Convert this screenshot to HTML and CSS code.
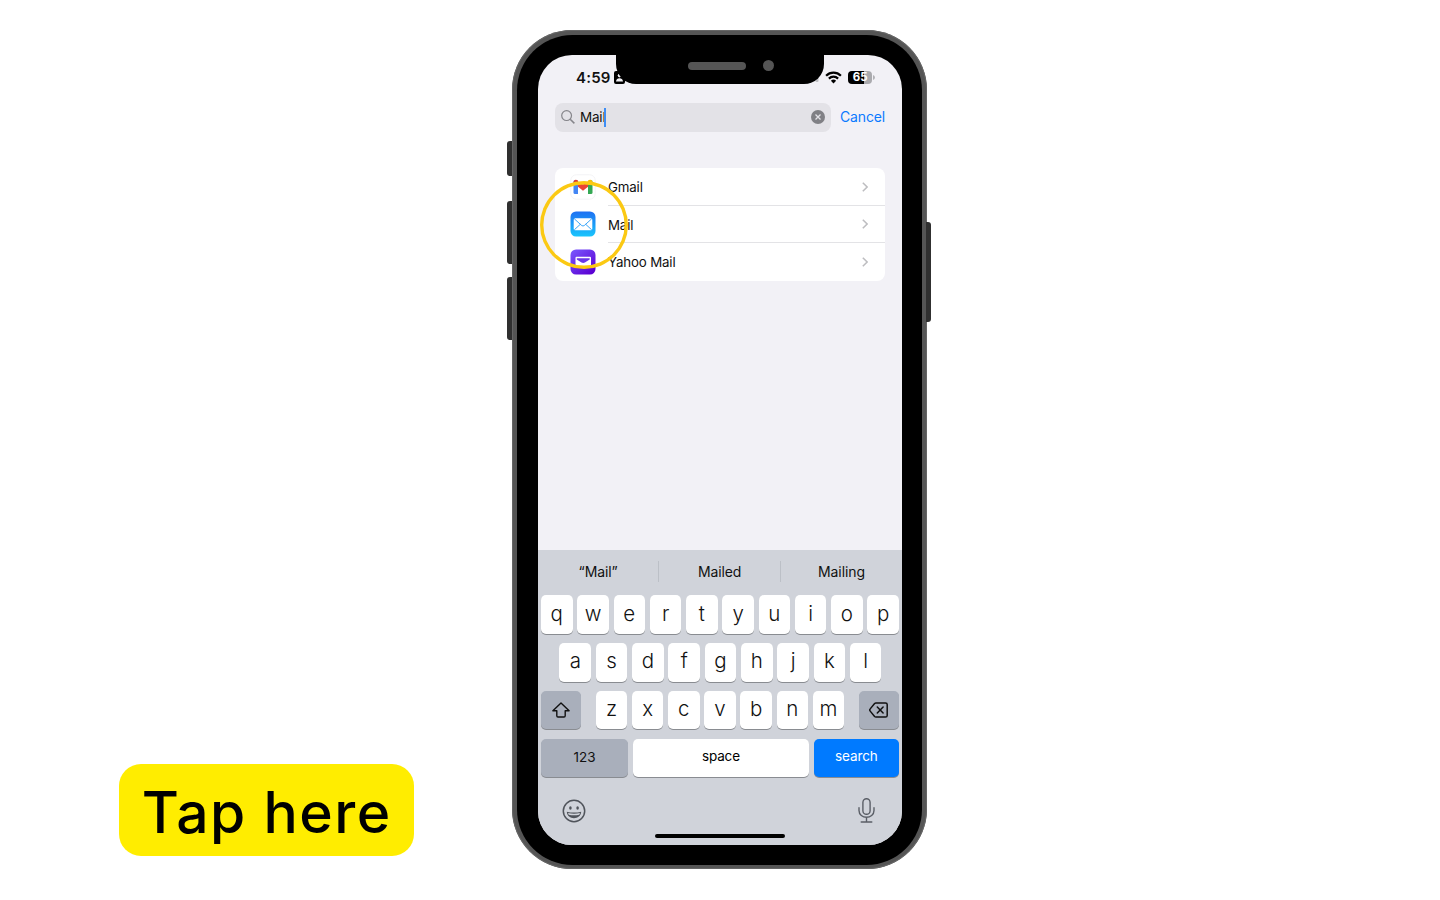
FILE: index.html
```html
<!DOCTYPE html>
<html lang="en">
<head>
<meta charset="utf-8">
<title>Mail settings</title>
<link rel="stylesheet" href="styles.css">
</head>
<body>
<main class="stage">
  <div class="callout"><span class="callout-text">Tap here</span></div>
  <div class="phone">
    <i class="side b1"></i><i class="side b2"></i><i class="side b3"></i><i class="side power"></i>
    <div class="rim">
    <div class="bezel">
      <div class="screen">
        <div class="status">
          <span class="time">4:59</span>
          <svg class="card" width="11" height="13" viewBox="0 0 11 13"><rect width="11" height="13" rx="2"/><circle cx="5.500" cy="4.600" r="1.800" fill="#f2f1f6"/><path d="M2 10.500c0-4.500 7-4.500 7 0z" fill="#f2f1f6"/></svg>
          <svg class="signal" width="6" height="5" viewBox="0 0 6 5"><rect x="2.500" width="3" height="5" rx="1" fill="#bdbdc1"/></svg>
          <svg class="wifi" width="17" height="13" viewBox="0 0 17 13"><g fill="none" stroke="#000" stroke-width="2.200"><path d="M1.100 4.700a10.500 10.500 0 0 1 14.800 0"/><path d="M3.900 7.600a6.500 6.500 0 0 1 9.200 0"/></g><path d="M5.900 9.800a3.700 3.700 0 0 1 5.200 0L8.500 12.400z"/></svg>
          <span class="battery"><b>65</b></span>
          <svg class="tip" width="2" height="5" viewBox="0 0 2 5"><path d="M0 0q2 .7 2 2.500T0 5z" fill="#b2b2b6"/></svg>
        </div>
        <div class="search">
          <div class="field">
            <svg class="glass" width="14" height="14" viewBox="0 0 14 14" fill="none" stroke="#85858a" stroke-width="1.200"><circle cx="5.600" cy="5.600" r="4.900"/><path d="M9.200 9.200l4.200 4.200" stroke-width="1.500"/></svg>
            <span class="query">Mail</span><i class="caret"></i>
            <svg class="clear" width="14" height="14" viewBox="0 0 14 14"><circle cx="7" cy="7" r="7" fill="#808085"/><path d="M4.500 4.500l5 5m0-5l-5 5" stroke="#e3e2e7" stroke-width="1.300"/></svg>
          </div>
          <span class="cancel">Cancel</span>
        </div>
        <div class="list">
          <div class="row">
            <svg class="app" width="26" height="26" viewBox="0 0 26 26"><rect x=".8" y=".8" width="24.400" height="24.400" rx="5.500" fill="#fff" stroke="#f3f3f5"/><path d="M3.500 8v10.500a1.500 1.500 0 0 0 1.500 1.500h3V9.500L4 6z" fill="#4285f4"/><path d="M22.500 8v10.500A1.500 1.500 0 0 1 21 20h-3V9.500L22 6z" fill="#34a853"/><path d="M8 7.500l5 3 5-3v5.300l-5 3.900-5-3.900z" fill="#ea4335"/><path d="M3.500 8.500c0-3 2.500-3.600 4.500-2v3.300H3.500z" fill="#d93a30"/><path d="M22.500 8.500c0-3-2.500-3.600-4.500-2v3.300h4.500z" fill="#fbbc04"/></svg>
            <div class="label"><span>Gmail</span><svg class="chev" width="6" height="10" viewBox="0 0 6 10"><path d="M.8.7L5.100 5 .8 9.300"/></svg></div>
          </div>
          <div class="row">
            <svg class="app" width="26" height="26" viewBox="0 0 26 26"><defs><linearGradient id="m" x2="0" y2="1"><stop stop-color="#1e70f2"/><stop offset="1" stop-color="#19c5fc"/></linearGradient></defs><rect x=".5" y=".5" width="25" height="25" rx="5.500" fill="url(#m)"/><rect x="3.700" y="7.300" width="18.600" height="12" rx="1.500" fill="#fff"/><path d="M4.300 7.800l7.400 6.700q1.300 1 2.600 0l7.400-6.700M4.300 18.800l6-5.500m11.400 5.500l-6-5.500" fill="none" stroke="#249bf7" stroke-width=".9"/></svg>
            <div class="label"><span>Mail</span><svg class="chev" width="6" height="10" viewBox="0 0 6 10"><path d="M.8.7L5.100 5 .8 9.300"/></svg></div>
          </div>
          <div class="row">
            <svg class="app" width="26" height="26" viewBox="0 0 26 26"><defs><linearGradient id="y" x2=".8" y2="1"><stop stop-color="#7a5aff"/><stop offset="1" stop-color="#5a00d2"/></linearGradient></defs><rect x=".5" y=".5" width="25" height="25" rx="5.500" fill="url(#y)"/><rect x="5.500" y="7.800" width="15.500" height="10.500" rx="1" fill="#fff"/><path d="M6.800 9.200h12.900v1.400l-4.800 3q-1.700.9-3.400 0l-4.700-3z" fill="#6936e8"/></svg>
            <div class="label"><span>Yahoo Mail</span><svg class="chev" width="6" height="10" viewBox="0 0 6 10"><path d="M.8.7L5.100 5 .8 9.300"/></svg></div>
          </div>
        </div>
        <div class="keyboard">
          <div class="suggest"><span>“Mail”</span><span>Mailed</span><span>Mailing</span></div>
          <div class="keys"><kbd>q</kbd><kbd>w</kbd><kbd>e</kbd><kbd>r</kbd><kbd>t</kbd><kbd>y</kbd><kbd>u</kbd><kbd>i</kbd><kbd>o</kbd><kbd>p</kbd></div>
          <div class="keys mid"><kbd>a</kbd><kbd>s</kbd><kbd>d</kbd><kbd>f</kbd><kbd>g</kbd><kbd>h</kbd><kbd>j</kbd><kbd>k</kbd><kbd>l</kbd></div>
          <div class="keys low">
            <kbd class="gray mod"><svg width="18" height="16" viewBox="0 0 18 16" fill="none" stroke="#111" stroke-width="1.400" stroke-linejoin="round"><path d="M9 .9L.9 8.700h3.900v5.100q0 1.200 1.200 1.200h6q1.200 0 1.200-1.200V8.700h3.900z"/></svg></kbd>
            <div class="keys inner"><kbd>z</kbd><kbd>x</kbd><kbd>c</kbd><kbd>v</kbd><kbd>b</kbd><kbd>n</kbd><kbd>m</kbd></div>
            <kbd class="gray mod"><svg width="19" height="16" viewBox="0 0 19 16" fill="none" stroke="#111" stroke-width="1.500" stroke-linejoin="round" stroke-linecap="round"><path d="M7 .9h9.500q1.700 0 1.700 1.700v10.800q0 1.700-1.700 1.700H7q-.8 0-1.400-.6L1.200 9.100q-1-1.100 0-2.200l4.400-5.400Q6.200.9 7 .9zM8.300 5l5.800 6m0-6l-5.800 6"/></svg></kbd>
          </div>
          <div class="keys bottom"><kbd class="gray num">123</kbd><kbd class="space">space</kbd><kbd class="go">search</kbd></div>
          <div class="tools">
            <svg width="24" height="24" viewBox="0 0 24 24"><circle cx="12" cy="12" r="10.700" fill="none" stroke="#50545b" stroke-width="1.500"/><ellipse cx="8.400" cy="9" rx="1.300" ry="1.700" fill="#50545b"/><ellipse cx="15.600" cy="9" rx="1.300" ry="1.700" fill="#50545b"/><path d="M4.800 12.700q7.200 1.800 14.400 0c-.4 8.600-14 8.600-14.400 0z" fill="#50545b"/><path d="M6 14q6 1.300 12 0l-.7 1.700q-5.300 1.300-10.600 0z" fill="#d0d3da"/></svg>
            <svg width="17" height="25" viewBox="0 0 17 25" fill="none" stroke="#5a5e66" stroke-width="1.400" stroke-linecap="round"><rect x="4.900" y=".8" width="7.200" height="15.500" rx="3.600"/><path d="M1 9.800v2.700c0 9 15 9 15 0V9.800M8.500 19.300v4.700M3.200 24h10.600"/></svg>
          </div>
          <div class="home"></div>
        </div>
      </div>
    </div>
    </div>
    <div class="notch"><i class="speaker"></i><i class="camera"></i></div>
    <div class="ring"></div>
  </div>
</main>
</body>
</html>
```
FILE: styles.css
```css
* { box-sizing: border-box; }
body { margin: 0; background: #fff; overflow: hidden; font-family: Inter, "Liberation Sans", sans-serif; color: #111; }
svg { display: block; flex: none; }
.stage { width: 1440px; height: 900px; display: flex; }
.callout { align-self: flex-end; margin: 0 0 44px 119.400px; width: 294.600px; height: 92px; border-radius: 22px; background: #ffed00; display: flex; align-items: center; justify-content: center; }
.callout-text { font-size: 57px; font-weight: 550; line-height: 70px; color: #000; white-space: nowrap; letter-spacing: 1.500px; padding-top: 5px; }
.phone { position: relative; margin: 30px 0 0 98.500px; width: 414.500px; height: 839px; }
.rim { height: 839px; padding: 4.500px; border-radius: 60px; background: #555; box-shadow: inset 0 0 0 1px #666; }
.bezel { height: 830px; padding: 20.500px 20.500px 20px 21px; border-radius: 55.500px; background: #000; }
.screen { width: 364px; height: 790px; border-radius: 34px; overflow: hidden; background: #f2f1f6; display: flex; flex-direction: column; }
.side { position: absolute; left: -5px; width: 5px; background: #303030; border-radius: 3px 0 0 3px; }
.b1 { top: 111px; height: 35px; }
.b2 { top: 171px; height: 63px; }
.b3 { top: 247px; height: 63px; }
.power { left: 414px; top: 192px; height: 100px; border-radius: 0 3px 3px 0; }
.notch { position: absolute; left: 103.500px; top: 24px; width: 208px; height: 30px; border-radius: 0 0 20px 20px; background: #000; }
.speaker { position: absolute; left: 72.500px; top: 8px; width: 57.500px; height: 8px; border-radius: 4px; background: #555; }
.camera { position: absolute; left: 147px; top: 6px; width: 11px; height: 11px; border-radius: 50%; background: #555; }
.ring { position: absolute; left: 28px; top: 150.500px; width: 88px; height: 88px; border-radius: 50%; box-shadow: inset 0 0 0 3.400px #fbc913; }
.status { height: 47.500px; padding: 12px 26px 0 38px; display: flex; align-items: flex-start; }
.time { width: 38px; padding-top: 1px; font-size: 15px; line-height: 20px; font-weight: 600; letter-spacing: .2px; white-space: nowrap; }
.card { margin-top: 4px; }
.signal { margin: 10px 0 0 188px; }
.wifi { margin: 4px 0 0 6px; }
.battery { margin: 3.500px 0 0 6px; width: 24.400px; height: 13px; border-radius: 4px; background: linear-gradient(90deg, #000 65%, #aaaaae 65%); color: #fff; font-size: 11.500px; line-height: 13px; text-align: center; }
.tip { margin: 8px 0 0 .6px; }
.search { height: 29px; padding: 0 17px; display: flex; align-items: center; justify-content: space-between; }
.field { width: 276px; height: 29px; border-radius: 8px; background: #e3e2e7; padding: 0 6px; display: flex; align-items: center; }
.query { margin-left: 5px; font-size: 13.500px; letter-spacing: -.2px; width: 24.500px; line-height: 18px; white-space: nowrap; }
.caret { width: 2px; height: 19px; background: #3f8ef5; }
.clear { margin-left: auto; }
.cancel { font-size: 14px; color: #0a7aff; letter-spacing: -.15px; width: 45px; line-height: 20px; }
.list { margin: 36.500px 17px 0; height: 112.500px; border-radius: 8px; background: #fff; }
.row { height: 37.500px; padding-left: 15px; display: flex; align-items: center; }
.label { flex: 1; height: 37.500px; margin-left: 12px; padding-right: 17px; display: flex; align-items: center; justify-content: space-between; font-size: 13.300px; letter-spacing: -.15px; }
.row + .row .label { box-shadow: 0 -1px 0 #e3e3e6; }
.row + .row span { padding-top: 1px; }
.chev { fill: none; stroke: #bdbdc0; stroke-width: 1.500; }
.keyboard { margin-top: auto; height: 295px; background: #d0d3da; padding: 0 3px; display: flex; flex-direction: column; }
.suggest { height: 45.300px; margin: 0 -3px; padding-top: 11px; display: grid; grid-template-columns: 120.300px 121.700px 1fr; font-size: 14px; letter-spacing: -.1px; text-align: center; }
.suggest span { height: 21px; line-height: 22px; }
.suggest span + span { border-left: 1px solid #bcc0c7; }
.keys { display: flex; gap: 4.700px; margin-bottom: 9.300px; }
kbd { flex: 1; min-width: 0; height: 38.500px; border-radius: 5px; background: #fff; box-shadow: 0 1px 0 #898c91; display: flex; align-items: center; justify-content: center; padding-bottom: 3px; font: 350 20.500px Inter, sans-serif; }
.mid { padding: 0 17.500px 0 18.500px; }
.low { gap: 0; justify-content: space-between; }
.inner { width: 248.500px; margin: 0; }
kbd.mod { flex: none; width: 40px; padding: 0; }
.gray { background: #a9afbb; }
.bottom kbd { font-size: 13.500px; font-weight: 400; flex: none; }
.bottom .num { width: 87px; padding: 0 0 1px; }
.bottom .space { width: 176.500px; color: #000; letter-spacing: -.15px; }
.bottom .go { width: 85px; background: #007aff; color: #fff; letter-spacing: -.1px; }
.tools { margin-top: 12px; padding: 0 24px 0 21px; display: flex; align-items: center; justify-content: space-between; }
.home { width: 130px; height: 4px; margin: 10.200px auto 0; border-radius: 2px; background: #000; }
```
